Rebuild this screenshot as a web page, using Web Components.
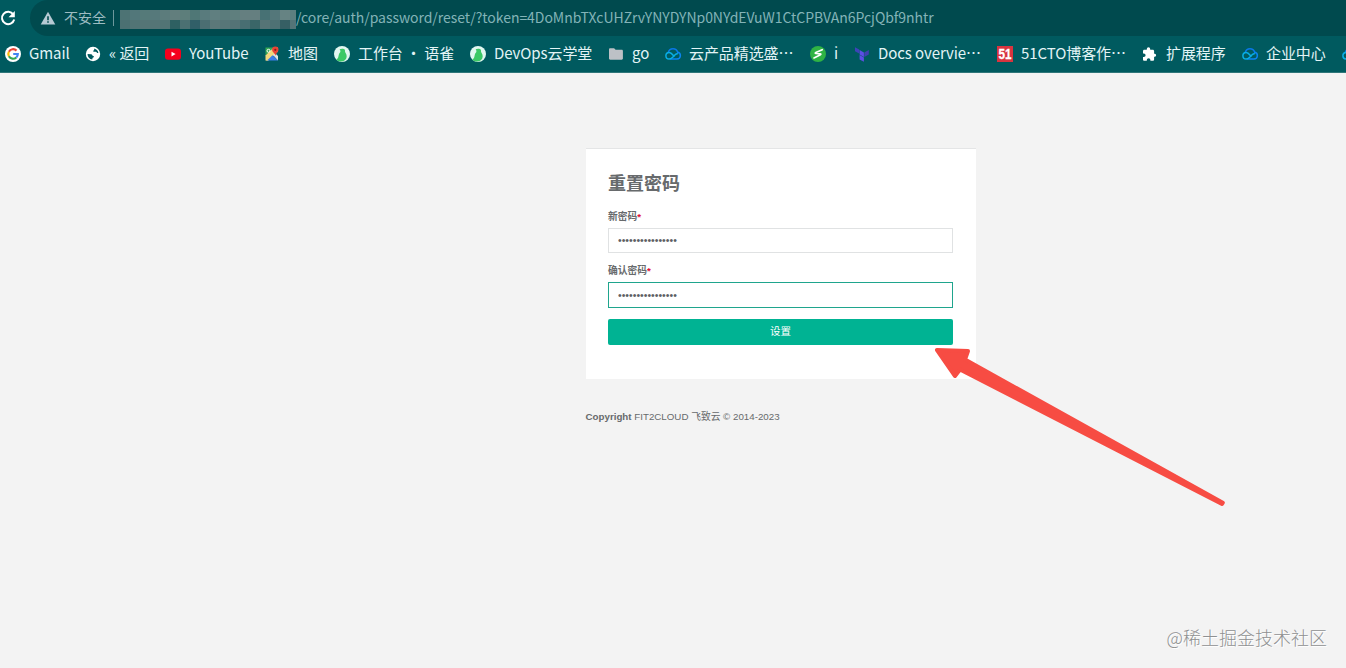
<!DOCTYPE html>
<html lang="zh-CN">
<head>
<meta charset="utf-8">
<title>重置密码</title>
<style>
  html, body { height: 100%; }
  body {
    margin: 0;
    background: #f3f3f3;
    overflow: hidden;
    font-family: "Liberation Sans", "Noto Sans CJK SC", sans-serif;
  }
</style>
</head>
<body>
<app-window></app-window>

<script>
const cloud = `
  <g fill="none" stroke-width="1.500" stroke-linecap="round">
    <path d="M3.300 6.200a4.900 4.900 0 0 1 9.400 0" stroke="#0a78e8"/>
    <path d="M12.700 6.200a3.500 3.500 0 0 1-.7 6.900H5.500" stroke="#0a84f0"/>
    <path d="M9 10.300C7.500 8.500 6.200 6.500 4.200 6.500a3.300 3.300 0 0 0 0 6.600c1.400 0 2.300-.7 3.200-1.600l3-3c.6-.6 1.200-.8 1.900-.8" stroke="#08aee6"/>
  </g>`;

const bird = `
  <circle cx="8" cy="8" r="8" fill="#e2f8f1"/>
  <path d="M5.600 3.300c1.500-1 4.500-.9 5.200.4.500.9-.1 1.900.7 3 1.800 2.300 1.600 5.700-.7 7.600-2.400 1.900-6.400 1.500-8.600-.9 1.900-.4 2.200-2.600 2.600-4.700.3-1.600 1.900-2 1.600-3.600-.2-.8-.3-1.300-.8-1.800z" fill="#3cc966"/>`;

const icons = {
  google: `
    <circle cx="8" cy="8" r="8" fill="#fff"/>
    <g fill="none" stroke-width="2.200">
      <path d="M11.500 4.600A4.800 4.800 0 0 0 3.900 5.700" stroke="#ea4335"/>
      <path d="M3.900 5.700a4.800 4.800 0 0 0 0 4.600" stroke="#fbbc05"/>
      <path d="M3.900 10.300a4.800 4.800 0 0 0 7.400 1.200" stroke="#34a853"/>
      <path d="M11.300 11.500A4.800 4.800 0 0 0 12.800 8H8.200" stroke="#4285f4"/>
    </g>`,
  globe: `
    <circle cx="8" cy="8" r="7.200" fill="#fff"/>
    <path d="M2.500 8l3.500.2c1.500.2 1 1.500 2.300 1.900.9.300.8 1.300-.1 1.500-.9.200-.6 1.200-1 2C4.500 13 2.500 11 2.500 8zM9.300 2.600c2.100.6 3.700 2.200 4.100 4.300l-1.300.1c-.3-.9-1.200-1.300-2.300-1.200L8.300 5.700c-.3-1.200 1.300-1.500 1-3.100z" fill="#005a5f"/>`,
  youtube: `
    <rect y="2.500" width="16" height="11.300" rx="3" fill="#f5001d"/>
    <path d="M6.500 5.700v4.800L10.600 8.100z" fill="#fff"/>`,
  maps: `
    <path d="M1.500 1.500h8l-8 8z" fill="#34a853"/>
    <path d="M1.500 9.500l8-8h4.500v4L4 15l-2.500-.5z" fill="#f2d87c"/>
    <path d="M3 14.500l5.500-5.300 5.500 5.300z" fill="#3b7de9"/>
    <path d="M9 9l2-2 3 3v4.500z" fill="#dfe3e6"/>
    <circle cx="4.500" cy="4.800" r="1.500" fill="none" stroke="#fff"/>
    <path d="M11.300.5a3.200 3.200 0 0 1 3.200 3.300c0 2.200-2.500 3.200-3.100 6-.5-2.800-3.300-3.800-3.300-6A3.200 3.200 0 0 1 11.300.5z" fill="#e94335"/>
    <circle cx="11.300" cy="3.800" r="1.100" fill="#8c1d18"/>`,
  bird,
  folder: `<path d="M2.200 2.200h3.900l1.500 1.600h6.100c.7 0 1.200.5 1.200 1.200v7.600c0 .7-.5 1.200-1.200 1.200H2.200c-.7 0-1.200-.5-1.200-1.200V3.400c0-.7.5-1.200 1.200-1.200z" fill="#bdc1c6"/>`,
  cloud,
  snake: `
    <circle cx="8" cy="8" r="8" fill="#2fb344"/>
    <path d="M12.200 3.700L5.800 6.600c-.8.4-.7.8.1.900l4.300.4c.8.100.8.500.2.900L4 11.900" fill="none" stroke="#fff" stroke-width="1.700" stroke-linecap="round"/>`,
  terraform: `
    <path d="M1 1.200l4.200 2.400v4L1 5.200z" fill="#3d43b8"/>
    <path d="M5.600 4l4.300 2.400v4.600L5.600 8.600zM5.600 9l4.300 2.400v4.400l-4.300-2.400z" fill="#5c4ee5"/>
    <path d="M10.300 6.400L14.800 4v4.600l-4.500 2.400z" fill="#4040b2"/>`,
  cto: `
    <rect width="16" height="16" fill="#d8343f"/>
    <text x="8" y="13" text-anchor="middle" textLength="13" lengthAdjust="spacingAndGlyphs" font-family="Liberation Sans, sans-serif" font-weight="700" font-size="14" fill="#fff" stroke="#fff" stroke-width=".3">51</text>`,
  puzzle: `<path d="M12.900 7.700h-.8V5c0-.7-.6-1.300-1.300-1.300H8.200v-.8a1.700 1.700 0 0 0-3.400 0v.8H2.300C1.600 3.700 1 4.300 1 5v2.400h.8a1.800 1.800 0 0 1 0 3.600H1v2.400c0 .8.600 1.300 1.300 1.300h2.500v-.7a1.800 1.800 0 0 1 3.600 0v.7h2.400c.7 0 1.300-.5 1.300-1.300v-2.600h.8a1.600 1.600 0 0 0 0-3.100z" fill="#fff"/>`,
  reload: `<path d="M13.300 4.400A6.200 6.200 0 1 0 14.200 9.500" fill="none" stroke="#fff" stroke-width="2"/><path d="M14.800 1v6.300H8.500z" fill="#fff"/>`,
  warning: `<path d="M8 1.800L15.300 14.400H.7z" fill="#b6c9d3"/><path d="M7.200 6.300h1.600v3.900H7.200zM7.200 11.200h1.600v1.600H7.200z" fill="#004a4e"/>`
};

class UiIcon extends HTMLElement {
  constructor() {
    super();
    this.attachShadow({ mode: 'open' });
  }

  connectedCallback() {
    this.shadowRoot.innerHTML = `
      <style>
        :host { display: block; width: 16px; height: 16px; flex: none; }
        svg { display: block; width: 100%; height: 100%; overflow: visible; }
      </style>
      <svg viewBox="0 0 16 16">${icons[this.getAttribute('name')]}</svg>
    `;
  }
}

// Pixelated block that hides the host part of the address
class HostMosaic extends HTMLElement {
  constructor() {
    super();
    this.attachShadow({ mode: 'open' });
  }

  connectedCallback() {
    const rows = [
      '#4d7374 #52777a #557a79 #56797b #5c7c7c #627e7d #5d7e7b #4f7776 #597b7d #607f80 #5b7c7c #5f7f7e #657f80 #657f80 #477174 #54777a #668383 #5d7f80',
      '#4b7072 #527475 #557576 #557576 #527475 #2e6062 #4b7072 #315f68 #4b6e72 #5c7879 #577678 #547376 #486e72 #3a6668 #567476 #4e7174 #365f64 #537477'
    ];
    this.shadowRoot.innerHTML = `
      <style>
        :host { display: grid; grid-template-columns: repeat(17, 10px) 6px; grid-template-rows: 10px 9px; width: 176px; height: 19px; margin-top: 2px; flex: none; }
      </style>
      ${rows.join(' ').split(' ').map(c => `<i style="background:${c}"></i>`).join('')}
    `;
  }
}

class AddressBar extends HTMLElement {
  constructor() {
    super();
    this.attachShadow({ mode: 'open' });
  }

  connectedCallback() {
    this.shadowRoot.innerHTML = `
      <style>
        :host { display: flex; height: 36px; background: #005a5f; color: #83b3b7; font: 14px/34px "Noto Sans CJK SC", sans-serif; white-space: nowrap; }
        .reload { margin: 10px 14px 0 0; }
        .field { flex: 1; display: flex; align-items: center; background: #004a4e; border-radius: 18px 0 0 18px; padding-left: 10px; }
        .state, .path { height: 36px; }
        .state { margin-left: 8px; width: 42px; color: #9dbcc2; }
        .line { width: 1px; height: 16px; margin: 0 6px 0 7px; background: #6d989c; }
        .path { letter-spacing: -.04px; }
      </style>
      <ui-icon class="reload" name="reload"></ui-icon>
      <div class="field">
        <ui-icon name="warning"></ui-icon>
        <span class="state">不安全</span>
        <span class="line"></span>
        <host-mosaic></host-mosaic>
        <span class="path"><slot></slot></span>
      </div>
    `;
  }
}

class BookmarkItem extends HTMLElement {
  constructor() {
    super();
    this.attachShadow({ mode: 'open' });
  }

  connectedCallback() {
    this.shadowRoot.innerHTML = `
      <style>
        :host { display: flex; align-items: center; gap: 8px; flex: none; white-space: nowrap; }
        span { height: 36px; letter-spacing: -.08px; }
      </style>
      <ui-icon name="${this.getAttribute('icon')}"></ui-icon>
      <span><slot></slot></span>
    `;
  }
}

class BookmarkBar extends HTMLElement {
  constructor() {
    super();
    this.attachShadow({ mode: 'open' });
  }

  connectedCallback() {
    // [icon, label, width of the item with the gap after it]
    const items = [
      ['google', 'Gmail', 80],
      ['globe', '« 返回', 80],
      ['youtube', 'YouTube', 99],
      ['maps', '地图', 70],
      ['bird', '工作台 · 语雀', 136],
      ['bird', 'DevOps云学堂', 138],
      ['folder', 'go', 57],
      ['cloud', '云产品精选盛…', 145],
      ['snake', 'i', 44],
      ['terraform', 'Docs overvie…', 143],
      ['cto', '51CTO博客作…', 145],
      ['puzzle', '扩展程序', 100],
      ['cloud', '企业中心', 100],
      ['cloud', '', 16]
    ];
    this.shadowRoot.innerHTML = `
      <style>
        :host {
          display: flex;
          box-sizing: border-box;
          height: 37px;
          padding-left: 5px;
          overflow: hidden;
          background: #005a5f;
          border-bottom: 1px solid #2f7679;
          color: #e3f4f6;
          font: 15px/34px "Noto Sans CJK SC", sans-serif;
        }
      </style>
      ${items.map(([icon, label, width]) => `<bookmark-item icon="${icon}" style="width:${width}px">${label}</bookmark-item>`).join('')}
    `;
  }
}

class PasswordField extends HTMLElement {
  constructor() {
    super();
    this.attachShadow({ mode: 'open' });
  }

  connectedCallback() {
    this.shadowRoot.innerHTML = `
      <style>
        :host { display: block; }
        label { display: block; font-weight: 700; font-size: 9.75px; line-height: 14px; }
        label span { color: #e0103a; }
        input {
          display: block;
          box-sizing: border-box;
          width: 100%;
          height: 25px;
          margin: 4px 0 0;
          padding: 0 9px 2px;
          border: 1px solid #e0e2e3;
          border-radius: 0;
          outline: 0;
          background: #fff;
          color: #5d6063;
          font: 10.500px "Liberation Sans", sans-serif;
        }
        :host([active]) input { height: 26px; padding-bottom: 0; border-color: #1fa58d; }
      </style>
      <label><slot></slot><span>*</span></label>
      <input type="password" value="0123456789abcdef">
    `;
  }
}

class ResetCard extends HTMLElement {
  constructor() {
    super();
    this.attachShadow({ mode: 'open' });
  }

  connectedCallback() {
    this.shadowRoot.innerHTML = `
      <style>
        :host {
          display: block;
          box-sizing: border-box;
          width: 390px;
          height: 231px;
          padding: 22px 23px 0 22px;
          background: #fff;
          border-top: 1px solid #e4e5e6;
          color: #676a6c;
        }
        h2 { margin: 0 0 13px; font-size: 18px; line-height: 26px; }
        password-field { margin-bottom: 11px; }
        button {
          display: block;
          width: 100%;
          height: 26px;
          margin-top: 11px;
          padding: 0 0 3px;
          border: 0;
          border-radius: 2px;
          background: #00b393;
          color: #fff;
          font: 10.500px "Liberation Sans", "Noto Sans CJK SC", sans-serif;
        }
      </style>
      <h2>重置密码</h2>
      <password-field>新密码</password-field>
      <password-field active>确认密码</password-field>
      <button>设置</button>
    `;
  }
}

class PointerArrow extends HTMLElement {
  constructor() {
    super();
    this.attachShadow({ mode: 'open' });
  }

  connectedCallback() {
    this.shadowRoot.innerHTML = `
      <style>
        :host { display: block; position: absolute; left: 930px; top: 340px; width: 300px; height: 170px; pointer-events: none; }
        svg { display: block; }
      </style>
      <svg width="300" height="170" viewBox="0 0 300 170">
        <path d="M7 10L38 11 35 19.500 292.800 162.700 292 164 30 29.500 25 36z" fill="#f74c43" stroke="#f74c43" stroke-width="4" stroke-linejoin="round"/>
      </svg>
    `;
  }
}

class AppWindow extends HTMLElement {
  constructor() {
    super();
    this.attachShadow({ mode: 'open' });
  }

  connectedCallback() {
    this.shadowRoot.innerHTML = `
      <style>
        :host { display: flex; flex-direction: column; height: 668px; }
        main { flex: 1; display: flex; flex-direction: column; padding: 75px 0 0 586px; }
        .copyright { margin: 30px 0 0 -.5px; color: #676a6c; font-size: 9.750px; line-height: 15px; }
        .credit {
          align-self: flex-end;
          margin: auto 19px 17px 0;
          color: #8f9091;
          font: 300 18px/28px "Noto Sans CJK SC", sans-serif;
          text-shadow: 1px 1px 0 #fff;
        }
      </style>
      <address-bar>/core/auth/password/reset/?token=4DoMnbTXcUHZrvYNYDYNp0NYdEVuW1CtCPBVAn6PcjQbf9nhtr</address-bar>
      <bookmark-bar></bookmark-bar>
      <main>
        <reset-card></reset-card>
        <div class="copyright"><b>Copyright</b> FIT2CLOUD 飞致云 © 2014-2023</div>
        <div class="credit">@稀土掘金技术社区</div>
      </main>
      <pointer-arrow></pointer-arrow>
    `;
  }
}

customElements.define('ui-icon', UiIcon);
customElements.define('host-mosaic', HostMosaic);
customElements.define('address-bar', AddressBar);
customElements.define('bookmark-item', BookmarkItem);
customElements.define('bookmark-bar', BookmarkBar);
customElements.define('password-field', PasswordField);
customElements.define('reset-card', ResetCard);
customElements.define('pointer-arrow', PointerArrow);
customElements.define('app-window', AppWindow);
</script>
</body>
</html>
